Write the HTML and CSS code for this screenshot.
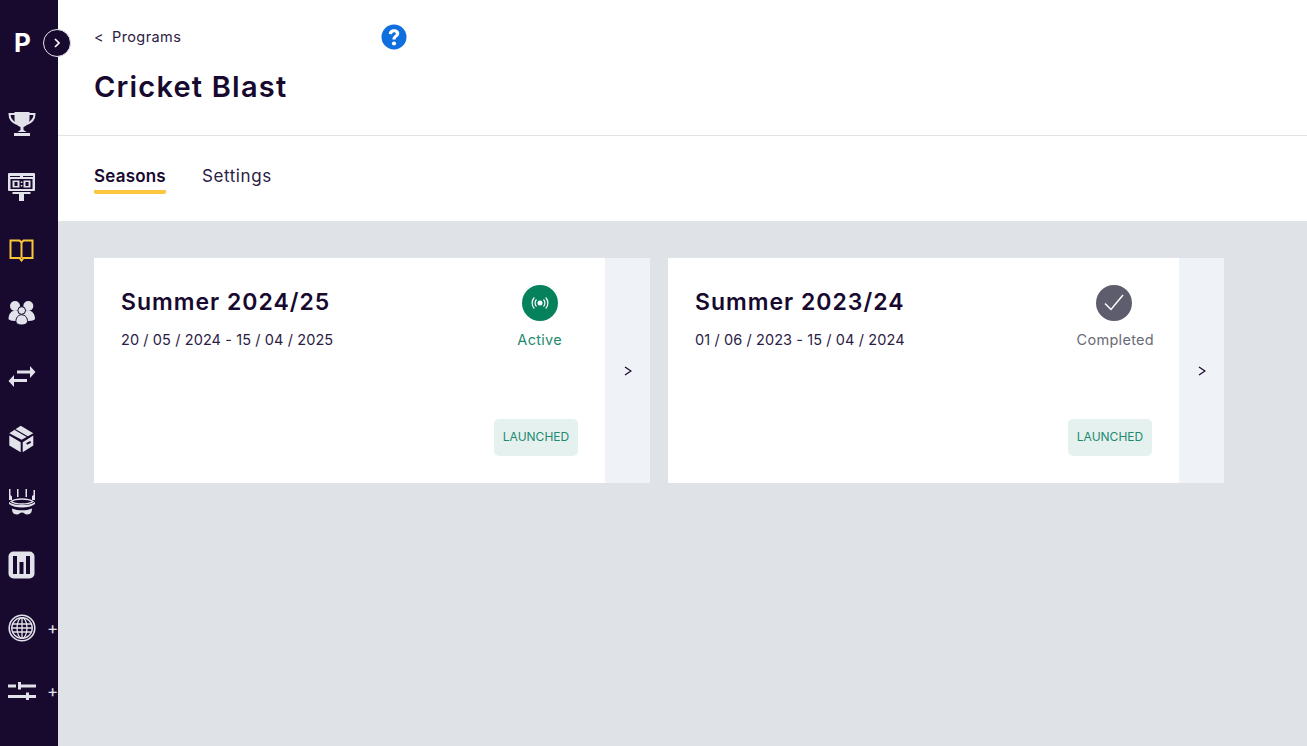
FILE: index.html
```html
<!DOCTYPE html>
<html lang="en">
<head>
<meta charset="utf-8">
<title>Cricket Blast</title>
<link rel="stylesheet" href="styles.css">
</head>
<body>
<div class="app">
  <aside class="sidebar">
    <div class="logo">P</div>
    <button class="toggle" aria-label="Expand"><svg width="10" height="10" viewBox="0 0 10 10"><path d="M3 1 7 5 3 9" fill="none" stroke="#fff" stroke-width="1.700"/></svg></button>
    <nav class="nav">
      <a class="nav-item"><svg width="28" height="26" viewBox="0 0 28 26"><path d="M6.500 1h15v7c0 4-3 7-6 8v3l3 2H9.500l3-2v-3c-3-1-6-4-6-8z" fill="#e2e2ea"/><path d="M7 3H1.500c0 5 2.500 8 7.500 10M21 3h5.500c0 5-2.500 8-7.500 10" fill="none" stroke="#e2e2ea" stroke-width="2"/><rect x="6" y="22" width="16" height="3" fill="#e2e2ea"/></svg></a>
      <a class="nav-item"><svg width="28" height="28" viewBox="0 0 28 28"><rect x="0" y="0" width="27" height="18" rx="1" fill="#e2e2ea"/><path d="M2 3h10v1H2zM15 3h10v1H15z" fill="#18092f"/><rect x="2.500" y="6" width="22" height="10" fill="#18092f"/><rect x="4.500" y="7.500" width="7" height="7" fill="#e2e2ea"/><rect x="15.500" y="7.500" width="7" height="7" fill="#e2e2ea"/><rect x="6.500" y="9" width="3" height="4" fill="#18092f"/><rect x="17.500" y="9" width="3" height="4" fill="#18092f"/><path d="M12.800 8.500h1.500V10h-1.500zM12.800 12h1.500v1.500h-1.500z" fill="#e2e2ea"/><rect x="4.500" y="19" width="18" height="2" fill="#e2e2ea"/><rect x="11" y="21" width="5" height="7" fill="#e2e2ea"/></svg></a>
      <a class="nav-item nudge"><svg width="26" height="24" viewBox="0 0 26 24"><path d="M12.500 4.500 10.500 2.500H1.500V20h9l2 2.500 2-2.500h9V2.500h-9zM12.500 4.500V20" fill="none" stroke="#f9c735" stroke-width="2"/></svg></a>
      <a class="nav-item"><svg width="28" height="26" viewBox="0 0 28 26" fill="#e2e2ea"><circle cx="7" cy="6" r="5"/><circle cx="20.300" cy="6" r="5"/><path d="M.5 19c0-5 3-8.500 6.500-8.500h13.500c3.500 0 6.500 3.500 6.500 8.500 0 1-4 2-7 2H7.500c-3 0-7-1-7-2z"/><circle cx="13.700" cy="10.500" r="3.800" stroke="#18092f" stroke-width="1"/><path d="M13.700 14.800c3.700 0 5.800 3 5.800 6.700 0 2-2.700 3.500-5.800 3.500s-5.800-1.500-5.800-3.500c0-3.700 2.100-6.700 5.800-6.700z" stroke="#18092f" stroke-width="1"/></svg></a>
      <a class="nav-item"><svg width="28" height="24" viewBox="0 0 28 24" fill="#e2e2ea"><path d="M9 6.500h13V2l5.500 6-5.500 6V9.500H9z"/><path d="M19 15H6v-4L.5 17 6 23v-5h13z"/></svg></a>
      <a class="nav-item nudge"><svg width="26" height="28" viewBox="0 0 26 28" fill="#e2e2ea"><path d="M11.700.8 24.300 8.200 12.700 14.800.3 8.200z"/><path d="M6 4.500 19.300 12.200" stroke="#18092f" stroke-width="1.200"/><path d="M.3 10.500 11.700 17.200v10L.3 20.500zM13.700 17.200 24.300 10.500v10l-10.600 6.700z"/><path d="M17.700 18.800l4-2" stroke="#18092f" stroke-width="2"/></svg></a>
      <a class="nav-item"><svg width="28" height="26" viewBox="0 0 28 26" fill="#e2e2ea"><path d="M1 0h1.500v6l1.500 1.500V11H1zM9 0h1.500v8H9zM17.500 0H19v8h-1.500zM25.500 1H27v10h-3V7l1.500-1z"/><path d="M1 13c3 2.500 8 3 13 3s10-.5 13-3v2c-3 2.500-8 3.500-13 3.500S4 17.500 1 15z"/><path d="M3 12.500C6 10.500 10 10 14 10s8 .5 11 2.500c-3 2-7 2.500-11 2.500s-8-.5-11-2.500z" fill="none" stroke="#e2e2ea" stroke-width="1.300"/><path d="M4 19.500c3 1.300 6.500 1.800 10 1.800s7-.5 10-1.800c0 3-1 6-5 6-2 0-3-2-5-2s-3 2-5 2c-4 0-5-3-5-6z"/></svg></a>
      <a class="nav-item"><svg width="27" height="28" viewBox="0 0 27 28"><rect x=".5" y=".5" width="26" height="27" rx="5" fill="#e2e2ea"/><rect x="5" y="5" width="4" height="18" fill="#18092f"/><rect x="11.500" y="11" width="4" height="12" fill="#18092f"/><rect x="18" y="5" width="4" height="18" fill="#18092f"/></svg></a>
      <a class="nav-item"><svg width="28" height="28" viewBox="0 0 28 28" fill="none" stroke="#e2e2ea"><circle cx="14" cy="14" r="12.800" stroke-width="1.600"/><circle cx="14" cy="14" r="10.300" stroke-width="1.300"/><ellipse cx="14" cy="14" rx="5" ry="10.300" stroke-width="1.300"/><path d="M14 3.500v21M4 10h20M3.700 14h20.600M4 18h20" stroke-width="1.300"/></svg><span class="plus">+</span></a>
      <a class="nav-item"><svg width="28" height="20" viewBox="0 0 28 20" fill="#e2e2ea"><rect x="0" y="3.500" width="8" height="3"/><rect x="10" y="1" width="3" height="7.500"/><rect x="13" y="3.500" width="15" height="3"/><rect x="0" y="14" width="18" height="3"/><rect x="18" y="11.500" width="3" height="7.500"/><rect x="21" y="14" width="7" height="3"/></svg><span class="plus">+</span></a>
    </nav>
  </aside>
  <main class="main">
    <header class="header">
      <div class="crumb-row">
        <a class="crumb"><span class="crumb-arrow">&lt;</span>Programs</a>
        <svg class="help" width="26" height="26" viewBox="0 0 26 26"><circle cx="13" cy="13" r="12.500" fill="#0f6fdf"/><path d="M7.800 10c0-3 2.300-4.800 5.300-4.800 3 0 5.200 1.800 5.200 4.400 0 3.400-3.700 3.300-3.700 6h-3.200c0-4 3.500-4 3.500-5.800 0-.9-.7-1.500-1.800-1.500-1.200 0-2 .7-2.100 2z" fill="#fff"/><circle cx="13" cy="19.500" r="2.100" fill="#fff"/></svg>
      </div>
      <h1 class="title">Cricket Blast</h1>
    </header>
    <div class="tabs">
      <a class="tab tab-active">Seasons</a>
      <a class="tab tab-plain">Settings</a>
    </div>
    <section class="content">
      <article class="card">
        <div class="card-body">
          <div class="card-top">
            <div>
              <h2 class="card-title">Summer 2024/25</h2>
              <p class="dates">20 / 05 / 2024 - 15 / 04 / 2025</p>
            </div>
            <div class="status status-active">
              <span class="status-icon icon-active"><svg width="20" height="20" viewBox="0 0 20 20" fill="none" stroke="#fff" stroke-width="1.200"><circle cx="10" cy="10" r="2.500" fill="#fff" stroke="none"/><path d="M6.500 6.500a5 5 0 0 0 0 7M13.500 6.500a5 5 0 0 1 0 7M4.300 4.500a8 8 0 0 0 0 11M15.700 4.500a8 8 0 0 1 0 11"/></svg></span>
              <span class="status-label">Active</span>
            </div>
          </div>
          <span class="badge">LAUNCHED</span>
        </div>
        <a class="card-more"><svg width="8" height="10" viewBox="0 0 8 10"><path d="M1 1l6 4-6 4" fill="none" stroke="#18092f" stroke-width="1.300"/></svg></a>
      </article>
      <article class="card">
        <div class="card-body">
          <div class="card-top">
            <div>
              <h2 class="card-title">Summer 2023/24</h2>
              <p class="dates">01 / 06 / 2023 - 15 / 04 / 2024</p>
            </div>
            <div class="status status-done">
              <span class="status-icon icon-done"><svg width="26" height="26" viewBox="0 0 26 26"><path d="M4 13.500l6 6L22 5" fill="none" stroke="#fff" stroke-width="1.500"/></svg></span>
              <span class="status-label">Completed</span>
            </div>
          </div>
          <span class="badge">LAUNCHED</span>
        </div>
        <a class="card-more"><svg width="8" height="10" viewBox="0 0 8 10"><path d="M1 1l6 4-6 4" fill="none" stroke="#18092f" stroke-width="1.300"/></svg></a>
      </article>
    </section>
  </main>
</div>
</body>
</html>
```
FILE: styles.css
```css
* { box-sizing: border-box; }
html, body { margin: 0; height: 100%; }
body { font-family: "Inter", "Liberation Sans", sans-serif; color: #18092f; overflow: hidden; }
.app { display: flex; height: 746px; }
.sidebar { width: 58px; flex: none; background: #18092f; position: relative; padding-top: 92px; }
.logo { position: absolute; left: 14px; top: 28px; font-size: 26px; line-height: 30px; font-weight: 700; color: #fff; }
.toggle { position: absolute; left: 43px; top: 29px; width: 28px; height: 28px; padding: 0; border: 1px solid #e4e4ec; border-radius: 50%; background: #18092f; display: flex; align-items: center; justify-content: center; z-index: 2; }
.nav { display: flex; flex-direction: column; }
.nav-item { height: 63px; padding-left: 8px; display: flex; align-items: center; position: relative; flex: none; }
.nudge { padding-left: 9px; }
.plus { position: absolute; left: 47px; top: 22px; font-size: 17px; line-height: 20px; color: #e2e2ea; font-weight: 400; }
.main { flex: 1; min-width: 0; display: flex; flex-direction: column; }
.header { height: 136px; border-bottom: 1px solid #e2e2e2; padding: 23px 36px 0; }
.crumb-row { display: flex; align-items: center; height: 28px; }
.crumb { font-size: 14.500px; color: #2c2045; width: 287px; display: flex; letter-spacing: .4px; margin-top: -2px; }
.crumb-arrow { width: 18px; }
.help { flex: none; }
.title { margin: 7px 0 0; font-size: 29px; line-height: 58px; height: 58px; font-weight: 600; letter-spacing: 1.2px; color: #18092f; }
.tabs { height: 85px; display: flex; gap: 36px; padding: 29px 36px 0; }
.tab { font-size: 17px; height: 29px; line-height: 22px; color: #2c2045; letter-spacing: .2px; }
.tab-plain { letter-spacing: .6px; }
.tab-active { font-weight: 600; color: #18092f; border-bottom: 4px solid #fcc73e; border-radius: 0 0 2px 2px; }
.content { flex: 1; background: #dfe2e7; display: flex; gap: 18px; align-items: flex-start; padding: 37px 36px; }
.card { width: 556px; height: 225px; background: #fff; display: flex; }
.card-body { flex: 1; padding: 27px; display: flex; flex-direction: column; align-items: flex-start; }
.card-top { width: 100%; display: flex; justify-content: space-between; height: 134px; }
.card-title { margin: 0; font-size: 23px; line-height: 34px; font-weight: 600; letter-spacing: 1px; color: #18092f; }
.dates { margin: 11px 0 0; font-size: 14.500px; line-height: 20px; color: #2c2045; letter-spacing: .1px; }
.status { display: flex; flex-direction: column; align-items: center; }
.status-active { margin-right: 16px; }
.status-done { margin-right: -2px; }
.status-icon { width: 36px; height: 36px; border-radius: 50%; display: flex; align-items: center; justify-content: center; }
.icon-active { background: #05825c; }
.icon-done { background: #5d5d6e; margin-right: 3px; }
.status-label { margin-top: 9px; font-size: 14.500px; line-height: 20px; letter-spacing: .3px; }
.status-active .status-label { color: #1f8a70; }
.status-done .status-label { color: #6a6a78; }
.badge { align-self: flex-end; width: 84px; height: 37px; background: #e5f1ee; border-radius: 5px; color: #1f8a70; font-size: 12px; line-height: 35px; text-align: center; }
.card-more { width: 45px; flex: none; background: #eff2f7; display: flex; align-items: center; justify-content: center; }
```
